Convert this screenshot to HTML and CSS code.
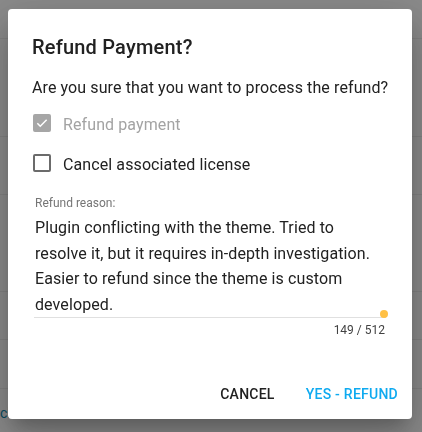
FILE: index.html
```html
<!DOCTYPE html>
<html lang="en">
<head>
    <meta charset="UTF-8">
    <meta name="viewport" content="width=device-width, initial-scale=1.0">
    <title>Refund Payment</title>
    <link rel="stylesheet" href="styles.css">
</head>
<body>
    <!-- page behind the dialog -->
    <div class="page">
        <div class="row r1"></div>
        <div class="row r2"></div>
        <div class="row r3"></div>
        <div class="row r4"></div>
        <div class="row r5"></div>
        <div class="row r6"></div>
        <div class="row r7"><span class="link">cl</span></div>
    </div>

    <div class="overlay">
        <div class="dialog">
            <h2 class="title">Refund Payment?</h2>
            <p class="text">Are you sure that you want to process the refund?</p>

            <div class="check-row disabled">
                <span class="box checked">
                    <svg width="14" height="14" viewBox="0 0 24 24"><path d="M4 12.5l5 5L20 6.5" fill="none" stroke="#fff" stroke-width="2.6"/></svg>
                </span>
                <span class="check-label">Refund payment</span>
            </div>
            <div class="check-row">
                <span class="box"></span>
                <span class="check-label">Cancel associated license</span>
            </div>

            <div class="field">
                <label class="field-label" for="reason">Refund reason:</label>
                <div class="field-input" id="reason">Plugin conflicting with the theme. Tried to resolve it, but it requires in-depth investigation. Easier to refund since the theme is custom developed.<span class="dot"></span></div>
                <div class="counter">149 / 512</div>
            </div>

            <div class="actions">
                <button type="button" class="btn">Cancel</button>
                <button type="button" class="btn primary">Yes - Refund</button>
            </div>
        </div>
    </div>
</body>
</html>
```

FILE: styles.css
```css
body{
    margin: 0;
    font-family: Roboto, "Liberation Sans", sans-serif;
    background: #fff;
}

.page{
    height: 432px;
    overflow: hidden;
}
.row{
    border-bottom: 1px solid #eeeeee;
}
.r1{ height: 38px; }
.r2{ height: 97px; }
.r3{ height: 57px; }
.r4{ height: 96px; }
.r5{ height: 47px; }
.r6{ height: 48px; }
.r7{
    height: 40px;
    padding-top: 16px;
}
.link{
    display: block;
    font-size: 14px;
    line-height: 16px;
    color: #0b89b0;
}

/* dark backdrop, the dialog sits on it */
.overlay{
    position: fixed;
    inset: 0;
    background: rgba(0, 0, 0, 0.46);
    padding: 9px 10px 13px 8px;
}
.dialog{
    width: 404px;
    height: 410px;
    box-sizing: border-box;
    background: #fff;
    border-radius: 4px;
    padding: 24px 24px 7px;
    display: flex;
    flex-direction: column;
    box-shadow: 0 11px 15px -7px rgba(0,0,0,.2), 0 24px 38px 3px rgba(0,0,0,.14), 0 9px 46px 8px rgba(0,0,0,.12);
}

.title{
    margin: 0;
    font-size: 20px;
    line-height: 28px;
    font-weight: 500;
    letter-spacing: 0.2px;
    color: #212121;
}
.text{
    margin: 15px 0 0;
    font-size: 16px;
    line-height: 24px;
    letter-spacing: 0.1px;
    white-space: nowrap;
    color: #212121;
}

.check-row{
    display: flex;
    align-items: center;
    height: 40px;
    gap: 12px;
    font-size: 16px;
    letter-spacing: 0.1px;
    color: #212121;
}
.check-row:first-of-type{
    margin-top: 3px;
}
.check-row.disabled{
    color: #a3a3a3;
}
.box{
    width: 18px;
    height: 18px;
    box-sizing: border-box;
    border: 2px solid #6b6b6b;
    border-radius: 2px;
    margin-left: 1px;
    display: flex;
    align-items: center;
    justify-content: center;
}
.box.checked{
    border-color: #a6a6a6;
    background: #a6a6a6;
}
.check-label{
    padding-top: 3px;
}

.field{
    margin: 12px 2px 0;
}
.field-label{
    display: block;
    font-size: 12px;
    line-height: 16px;
    color: #757575;
    padding-left: 1px;
}
.field-input{
    position: relative;
    margin-top: 4px;
    font-size: 16px;
    line-height: 25.5px;
    letter-spacing: 0.1px;
    color: #212121;
    padding: 0 12px 0 1px;
    border-bottom: 1px solid #e0e0e0;
}
.dot{
    position: absolute;
    right: -2px;
    bottom: -1px;
    width: 8px;
    height: 8px;
    border-radius: 50%;
    background: #ffc045;
}
.counter{
    text-align: right;
    font-size: 12px;
    line-height: 16px;
    margin-top: 4px;
    padding-right: 1px;
    color: #424242;
}

.actions{
    margin-top: auto;
    display: flex;
    justify-content: flex-end;
    gap: 15px;
    margin-right: -18px;
}
.btn{
    border: 0;
    background: none;
    font-family: inherit;
    font-size: 14px;
    font-weight: 500;
    letter-spacing: 0.25px;
    text-transform: uppercase;
    height: 36px;
    padding: 0 8px;
    color: #212121;
}
.btn.primary{
    color: #0eaaf0;
}
```
